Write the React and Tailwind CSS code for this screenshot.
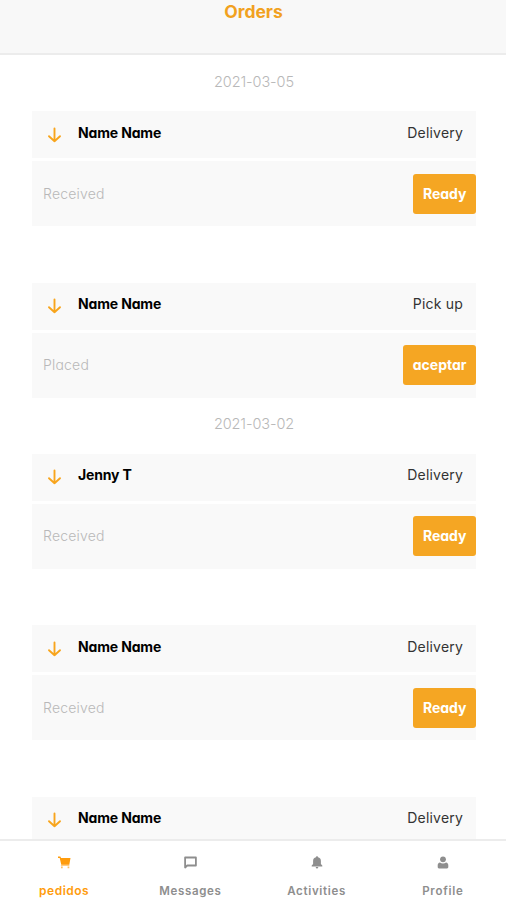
import React from 'react';

const groups = [
  {
    date: '2021-03-05',
    orders: [
      { id: 1, name: 'Name Name', type: 'Delivery', status: 'Received', action: 'Ready' },
      { id: 2, name: 'Name Name', type: 'Pick up', status: 'Placed', action: 'aceptar' },
    ],
  },
  {
    date: '2021-03-02',
    orders: [
      { id: 3, name: 'Jenny T', type: 'Delivery', status: 'Received', action: 'Ready' },
      { id: 4, name: 'Name Name', type: 'Delivery', status: 'Received', action: 'Ready' },
      { id: 5, name: 'Name Name', type: 'Delivery' },
    ],
  },
];

const ArrowDown = () => (
  <svg className="w-[15px] h-4" viewBox="0 0 15 16" fill="none" stroke="#f8a51d" strokeWidth="1.9" strokeLinecap="round" strokeLinejoin="round">
    <path d="M7.5 1.5v12.7M2 9.2l5.500 5 5.500-5" />
  </svg>
);

const CartIcon = () => (
  <svg className="w-[13px] h-[13px]" viewBox="0 0 13 13" fill="currentColor">
    <path d="M0 .6h2.300l.8 1.500h9.400L11.300 8.800H3.300L1.700 1.900H0z" />
    <path d="M2.900 8.800h8.400v1H2.900z" opacity=".65" />
    <path d="M3 10.500h1.700v1.700H3zM9.600 10.500h1.700v1.700H9.600z" opacity=".65" />
  </svg>
);

const MessageIcon = () => (
  <svg className="w-[13px] h-[13px]" viewBox="0 0 13 13" fill="none" stroke="currentColor" strokeWidth="1.800" strokeLinejoin="round">
    <path d="M1.100 1.500h10.800v8H3.200l-2.100 2z" />
  </svg>
);

const BellIcon = () => (
  <svg className="w-3 h-[13px]" viewBox="0 0 12 13" fill="currentColor">
    <path d="M6 0.300c.6 0 1 .4 1 1 1.900.5 2.900 1.800 2.900 3.600v3l1.400 1.600v.9H.7v-.9l1.400-1.600v-3C2.100 3.100 3.100 1.800 5 1.300c0-.6.4-1 1-1zM4.700 11h2.600c0 .9-.6 1.500-1.300 1.500S4.700 11.900 4.700 11z" />
  </svg>
);

const PersonIcon = () => (
  <svg className="w-3 h-[13px]" viewBox="0 0 12 13" fill="currentColor">
    <circle cx="6" cy="3.300" r="2.900" />
    <path d="M3 6.400C4.500 7.700 7.500 7.700 9 6.400c1.500.2 2.300 1.300 2.300 2.800v1.900c0 .8-.5 1.300-1.300 1.300H2C1.200 12.400.7 11.900.7 11.100V9.200C.7 7.700 1.500 6.600 3 6.400z" />
  </svg>
);

const tabs = [
  { label: 'pedidos', icon: <CartIcon />, active: true, text: 'text-[12px] tracking-[0.5px]' },
  { label: 'Messages', icon: <MessageIcon />, text: 'text-[11.5px] tracking-[0.65px]' },
  { label: 'Activities', icon: <BellIcon />, text: 'text-[11.5px] tracking-[0.7px]' },
  { label: 'Profile', icon: <PersonIcon />, text: 'text-[11.5px] tracking-[0.75px]' },
];

const DateLabel = ({ date }) => (
  <div className="flex items-center justify-center h-14 pb-[3px] text-[14.5px] font-light tracking-[-0.1px] text-[#b8b8b8]">
    {date}
  </div>
);

const OrderCard = ({ order }) => (
  <div>
    <div className="flex items-center h-[47px] pl-[15px] pr-[13px] bg-[#f9f9f9]">
      <span><ArrowDown /></span>
      <span className="pb-1 ml-4 text-sm font-bold tracking-[-0.15px] text-black">{order.name}</span>
      <span className="pb-1 ml-auto text-sm tracking-[0.2px] text-[#333333]">{order.type}</span>
    </div>
    {order.status && (
      <div className="flex items-center justify-between h-[65px] mt-[3px] pl-[11px] bg-[#f9f9f9]">
        <span className="text-sm font-light tracking-[0.2px] text-[#b8b8b8]">{order.status}</span>
        <button className="h-10 px-[9.5px] rounded-[3px] bg-[#f5a623] text-sm font-bold text-white">
          {order.action}
        </button>
      </div>
    )}
  </div>
);

export default function App() {
  return (
    <div className="flex flex-col w-full h-[900px] overflow-hidden bg-white font-['Inter',sans-serif]">
      <header className="h-[55px] shrink-0 border-b-2 border-[#ececec] bg-[#f8f8f8] text-center">
        <h1 className="pl-px text-[17.5px] leading-6 font-bold text-[#f1a11f]">Orders</h1>
      </header>
      <main className="flex-1 min-h-0 pl-8 pr-[30px] overflow-hidden [font-feature-settings:'cv11']">
        {groups.map(g => (
          <section key={g.date}>
            <DateLabel date={g.date} />
            <div className="space-y-[56.6px]">
              {g.orders.map(o => <OrderCard key={o.id} order={o} />)}
            </div>
          </section>
        ))}
      </main>
      <nav className="grid grid-cols-4 h-[61px] pl-px shrink-0 border-t-2 border-[#ececec] bg-white">
        {tabs.map(t => (
          <div key={t.label} className={t.active ? 'flex flex-col items-center pt-[14px] text-[#ff9c0c]' : 'flex flex-col items-center pt-[14px] text-[#8e8e8e]'}>
            <span className="flex items-center justify-center h-[15px]">{t.icon}</span>
            <span className={`mt-[13px] leading-4 font-semibold ${t.text}`}>{t.label}</span>
          </div>
        ))}
      </nav>
    </div>
  )
}
